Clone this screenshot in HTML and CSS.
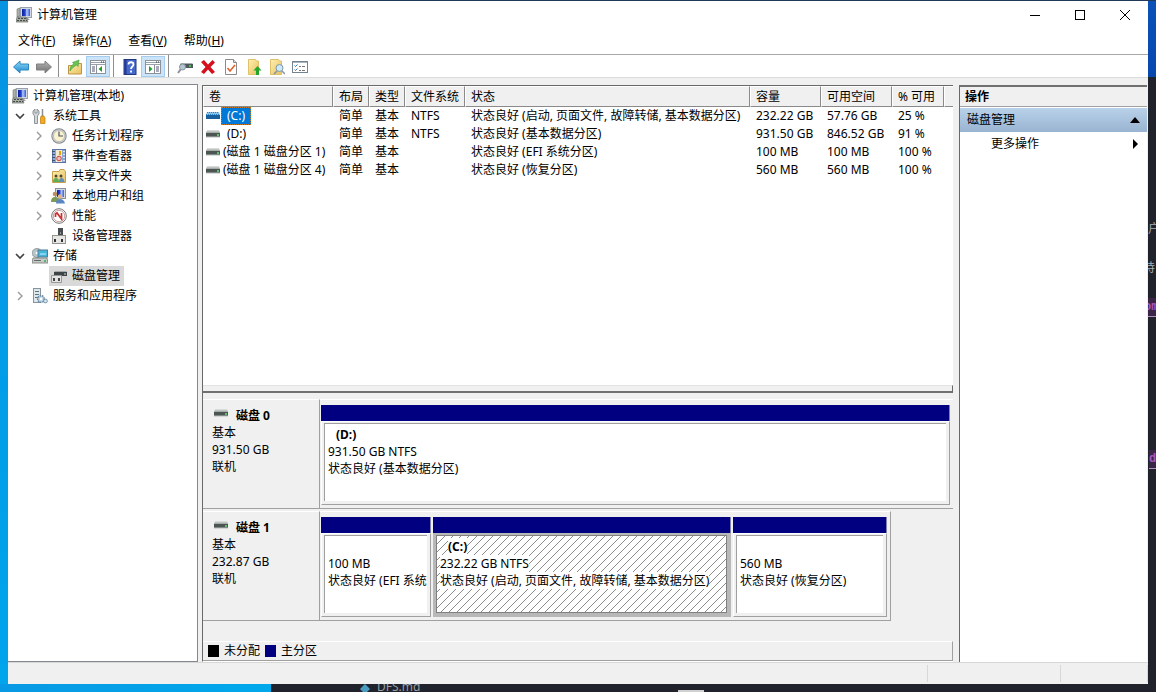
FILE: index.html
```html
<!DOCTYPE html>
<html lang="zh-CN">
<head>
<meta charset="utf-8">
<title>计算机管理</title>
<link rel="stylesheet" href="styles.css">
</head>
<body>
<svg class="sprite" aria-hidden="true">
  <defs>
    <linearGradient id="gBlue" x1="0" y1="0" x2="0" y2="1"><stop offset="0" stop-color="#8fdcf8"/><stop offset="1" stop-color="#1c86d0"/></linearGradient>
    <linearGradient id="gGray" x1="0" y1="0" x2="0" y2="1"><stop offset="0" stop-color="#b4b4b4"/><stop offset="1" stop-color="#6f6f6f"/></linearGradient>
    <linearGradient id="gFolder" x1="0" y1="0" x2="1" y2="1"><stop offset="0" stop-color="#fdf0b0"/><stop offset="1" stop-color="#e8c060"/></linearGradient>
    <linearGradient id="gScreen" x1="0" y1="0" x2="1" y2="0"><stop offset="0" stop-color="#0a1c9c"/><stop offset=".4" stop-color="#2446d0"/><stop offset=".6" stop-color="#b8ccfa"/><stop offset="1" stop-color="#3658d8"/></linearGradient>
    <linearGradient id="gDrive" x1="0" y1="0" x2="0" y2="1"><stop offset="0" stop-color="#e4e8e6"/><stop offset="1" stop-color="#9aa09c"/></linearGradient>
  </defs>
  <symbol id="computer" viewBox="0 0 16 16">
    <path d="M1 2l3-1v8l-3 1z" fill="#a8b0a8" stroke="#777" stroke-width=".6"/>
    <rect x="4.500" y=".5" width="11" height="10" fill="#d5d9e2" stroke="#9aa0ac"/>
    <rect x="6" y="2" width="8" height="7" fill="url(#gScreen)"/>
    <path d="M8 11h4l2 2H8z" fill="#9aa0a4"/>
    <path d="M1 10h9l2 5H0z" fill="#a9aea9" stroke="#666b66" stroke-width=".7"/>
    <path d="M2 11.500h8M1 13.500h10" stroke="#454c46" stroke-dasharray="2 1"/>
  </symbol>
  <symbol id="back" viewBox="0 0 16 16"><path d="M.5 8L7 2v3h8.500v6H7v3z" fill="url(#gBlue)" stroke="#2f86bd"/></symbol>
  <symbol id="forward" viewBox="0 0 16 16"><path d="M15.500 8L9 2v3H.5v6H9v3z" fill="url(#gGray)" stroke="#808080"/></symbol>
  <symbol id="folderup" viewBox="0 0 16 16">
    <path d="M1.500 6.500h5l1-2h7v10.500h-13z" fill="url(#gFolder)" stroke="#bd9443"/>
    <path d="M3 12c0-5 2-6 4-7L5.500 3.500 12 1l-1 6.500L9.500 6C7 7.500 5 9 3 12z" fill="#6cc455" stroke="#3f9a3a" stroke-width=".6"/>
  </symbol>
  <symbol id="paneleft" viewBox="0 0 16 16">
    <rect x=".5" y="1.500" width="15" height="13" fill="#fff" stroke="#8b9299"/>
    <path d="M1 3.500h14M1 5.500h14" stroke="#9aa1a8"/><path d="M11 3h1M13 3h1" stroke="#333"/>
    <path d="M6.500 6v8" stroke="#8b9299"/><path d="M2 8h3M2 10h3M2 12h3" stroke="#557"/>
    <path d="M12 7v6L8.500 10z" fill="#249b2c"/>
  </symbol>
  <symbol id="paneright" viewBox="0 0 16 16">
    <rect x=".5" y="1.500" width="15" height="13" fill="#fff" stroke="#8b9299"/>
    <path d="M1 3.500h14M1 5.500h14" stroke="#9aa1a8"/><path d="M11 3h1M13 3h1" stroke="#333"/>
    <path d="M9.500 6v8" stroke="#8b9299"/><path d="M11 8h3M11 10h3M11 12h3" stroke="#557"/>
    <path d="M4 7v6l3.500-3z" fill="#249b2c"/>
  </symbol>
  <symbol id="help" viewBox="0 0 16 16">
    <rect x="2" y=".5" width="12" height="15" fill="#4468cc" stroke="#24367e"/><path d="M3.500 1v14" stroke="#25398c" stroke-width="2"/>
    <path d="M6.500 5.500c0-3 5-3 5 0 0 2-2.500 2-2.500 4.500M9 11.500v2" fill="none" stroke="#fff" stroke-width="1.800"/>
  </symbol>
  <symbol id="scan" viewBox="0 0 16 16">
    <path d="M3 5l1-1h11l1 1v4H3z" fill="#a9afb0"/><path d="M3 5h13v4H3z" fill="#4e585a"/><path d="M12 7h2" stroke="#58d95c" stroke-width="1.500"/>
    <circle cx="5.500" cy="8" r="3" fill="#b4c8d4" stroke="#8a949c"/><path d="M3.500 10.500L1 14" stroke="#8b9196" stroke-width="2"/>
  </symbol>
  <symbol id="delete" viewBox="0 0 16 16"><path d="M1 3l3-2 4 4.500L12.500 1 15 3.500 10.500 8l4.500 5-3 2-4-4.500L4 15l-3-2 4.500-5z" fill="#d3101c"/></symbol>
  <symbol id="doccheck" viewBox="0 0 16 16"><path d="M2.500.5h8l3 3v12h-11z" fill="#fff" stroke="#8a8a8a"/><path d="M10.500.5v3h3" fill="#ddd" stroke="#8a8a8a"/><path d="M4.500 9l2.500 3 5-6" fill="none" stroke="#e0622c" stroke-width="1.600"/></symbol>
  <symbol id="fileup" viewBox="0 0 16 16"><path d="M2.500.5h7l1 1.500h2v13.500h-10z" fill="url(#gFolder)" stroke="#e0c06a"/><path d="M11.500 7l4 4.500h-2.500V16h-3v-4.500H7.500z" fill="#24a62d"/></symbol>
  <symbol id="filesearch" viewBox="0 0 16 16"><path d="M1.500.5h8l1 1.500h2v13.500h-11z" fill="url(#gFolder)" stroke="#e0c06a"/><circle cx="10.500" cy="9" r="3.500" fill="#cbe9f6" stroke="#8198a4"/><path d="M8 12l-3 3M13 12l3 3" stroke="#8793a0" stroke-width="1.500"/></symbol>
  <symbol id="checklist" viewBox="0 0 16 16"><rect x=".5" y="2.500" width="15" height="11" fill="#fff" stroke="#74838f"/><path d="M1 3.500h14" stroke="#a9b7c0"/><path d="M2.500 6.500l1 1 2-2M2.500 10.500l1 1 2-2" fill="none" stroke="#3471b3"/><path d="M7 7.500h2M10 7.500h3M7 11.500h2M10 11.500h3" stroke="#777"/></symbol>
  <symbol id="tools" viewBox="0 0 16 16">
    <path d="M3 1v4h2V1l2 2v3L5.500 8v7.500h-3V8L1 6V3z" fill="#d5d8da" stroke="#777e84" stroke-width=".8"/>
    <path d="M10.500 1v7" stroke="#8a9196" stroke-width="1.500"/><path d="M9 8h3l1 2v5.500H8.500V10z" fill="#f5a91c" stroke="#b97a12" stroke-width=".7"/>
  </symbol>
  <symbol id="clock" viewBox="0 0 16 16"><circle cx="8" cy="8" r="7.700" fill="#85898d"/><circle cx="8" cy="8" r="6.700" fill="#cfd3d6"/><circle cx="8" cy="8" r="5.500" fill="#fbf3d0" stroke="#9c9c9c" stroke-width=".5"/><path d="M8 3.500V8h4" fill="none" stroke="#4a5560" stroke-width="1.200"/></symbol>
  <symbol id="events" viewBox="0 0 16 16"><rect x="1.500" y="1.500" width="13" height="13" fill="#8da8d4" stroke="#5b74a4"/><rect x="5" y="2" width="6" height="12" fill="#f1ead0"/><path d="M12 3.500h2M12 6.500h2M12 9.500h2M12 12.500h2" stroke="#dce6f6"/><path d="M1 3.500h3M1 6.500h3M1 9.500h3M1 12.500h3" stroke="#44546c"/><path d="M9 3v4" stroke="#e3a400" stroke-width="2"/><circle cx="8" cy="10.500" r="2.300" fill="#ecc0b8" stroke="#c94040"/></symbol>
  <symbol id="share" viewBox="0 0 16 16"><path d="M1.500 3.500H8l1-2h4l1.500 2v11h-13z" fill="url(#gFolder)" stroke="#c6a04a"/><circle cx="5" cy="8" r="1.500" fill="#4a4634"/><path d="M2 14q0-4 3-4t3 4z" fill="#5fae55"/><circle cx="10" cy="8" r="1.500" fill="#4a4634"/><path d="M8 14q0-4 2.500-4t3 4z" fill="#5f8fb8"/></symbol>
  <symbol id="users" viewBox="0 0 16 16"><rect x="4.500" y=".5" width="10" height="10" fill="#d5d9e2" stroke="#8a8f98"/><rect x="6" y="2" width="7" height="7" fill="url(#gScreen)"/><circle cx="4" cy="6" r="2.300" fill="#b99160"/><path d="M0 14q0-5 4-5t4 5z" fill="#7d9b55"/><circle cx="9" cy="8.500" r="2.300" fill="#dfb78b"/><path d="M5 15.500q0-4.500 4-4.500t5 4.500z" fill="#5b86c4"/></symbol>
  <symbol id="perf" viewBox="0 0 16 16"><circle cx="8" cy="8" r="7.300" fill="#fff" stroke="#757575"/><circle cx="8" cy="8" r="5.700" fill="#fff" stroke="#c8a0a0"/><path d="M4.500 9V6L6 5l4.500 6V5" fill="none" stroke="#c93030" stroke-width="1.700"/></symbol>
  <symbol id="device" viewBox="0 0 16 16"><rect x="7" y="0" width="5" height="8" fill="#474c4f"/><path d="M9 5h1" stroke="#ddd"/><rect x="1.500" y="7.500" width="13" height="8" fill="#e6e7e5" stroke="#91958f"/><rect x="3" y="11" width="2" height="3" fill="#333"/><rect x="10" y="11" width="2" height="3" fill="#333"/></symbol>
  <symbol id="storage" viewBox="0 0 16 16"><ellipse cx="5" cy="5" rx="5" ry="4.500" fill="#b9c4c8" stroke="#7c8589" stroke-width=".7"/><circle cx="5" cy="5" r="1.300" fill="#fff"/><rect x="6" y="2" width="9.500" height="7" fill="#46b5dc" stroke="#4e7e93"/><path d="M8 6h6" stroke="#c5f3ff"/><path d="M1 10h14l1 5H0z" fill="#c8ccca" stroke="#737974" stroke-width=".8"/><path d="M2 12.500h7" stroke="#666"/><path d="M12 13h2" stroke="#33b549" stroke-width="1.500"/></symbol>
  <symbol id="diskmgmt" viewBox="0 0 16 16"><path d="M3 4h13v4H3z" fill="#3f4546"/><path d="M4 3h11l1 1H3z" fill="#a5aaa8"/><path d="M13 6h2" stroke="#cfd4d1"/><path d="M.5 7.500h10v7H.5z" fill="#e4e5e3" stroke="#999"/><path d="M3 10v3M8 10v3" stroke="#333" stroke-width="1.800"/></symbol>
  <symbol id="services" viewBox="0 0 16 16"><rect x="1.500" y=".5" width="7" height="14" fill="#dde8ec" stroke="#87949b"/><path d="M3 3.500h4M3 6.500h4M3 9.500h4" stroke="#64737b"/><circle cx="9" cy="11" r="3.300" fill="#c5d9e8" stroke="#6687a2" stroke-dasharray="1.500 .8" stroke-width="1.500"/><circle cx="9" cy="11" r="1.200" fill="#fff"/><circle cx="13.500" cy="13" r="1.900" fill="#d4e4ef" stroke="#6687a2" stroke-width=".8"/></symbol>
  <symbol id="drive" viewBox="0 0 14 8"><path d="M1 0h12l1 3H0z" fill="url(#gDrive)"/><path d="M0 3h14v4H0z" fill="#4b5652"/><path d="M0 7h14" stroke="#b8bcba"/><path d="M11 5h2" stroke="#6fe07c" stroke-width="1.500"/></symbol>
  <symbol id="driveSel" viewBox="0 0 14 8"><path d="M1 0h12l1 3H0z" fill="#8fc4e8"/><path d="M0 3h14v4H0z" fill="#17609b"/><path d="M1 .5h12M0 2.500h14" stroke="#2784c8" stroke-dasharray="1 1"/></symbol>
  <symbol id="open" viewBox="0 0 10 10"><path d="M1 3l4 4 4-4" fill="none" stroke="#404040" stroke-width="1.600"/></symbol>
  <symbol id="closed" viewBox="0 0 10 10"><path d="M3 1l4 4-4 4" fill="none" stroke="#9a9a9a" stroke-width="1.400"/></symbol>
</svg>

<div class="desktop">
  <div class="editor-edge" aria-hidden="true">
    <span class="frag frag-a">户</span>
    <span class="frag frag-b">持</span>
    <span class="frag frag-c">om</span>
    <span class="frag frag-d">d</span>
  </div>

  <main class="window">
    <header class="titlebar">
      <svg class="icon"><use href="#computer"/></svg>
      <h1 class="title">计算机管理</h1>
      <div class="caption">
        <button class="cap" aria-label="最小化"><svg class="cap-icon" viewBox="0 0 10 10"><path d="M0 5.500h10" stroke="#000"/></svg></button>
        <button class="cap" aria-label="最大化"><svg class="cap-icon" viewBox="0 0 10 10"><rect x=".5" y=".5" width="9" height="9" fill="none" stroke="#000"/></svg></button>
        <button class="cap" aria-label="关闭"><svg class="cap-icon" viewBox="0 0 10 10"><path d="M0 0l10 10M10 0L0 10" stroke="#000"/></svg></button>
      </div>
    </header>

    <nav class="menubar">
      <button class="menu">文件(<u>F</u>)</button>
      <button class="menu">操作(<u>A</u>)</button>
      <button class="menu">查看(<u>V</u>)</button>
      <button class="menu">帮助(<u>H</u>)</button>
    </nav>

    <div class="toolbar">
      <div class="group">
        <button class="tool" aria-label="后退"><svg class="icon"><use href="#back"/></svg></button>
        <button class="tool" aria-label="前进"><svg class="icon"><use href="#forward"/></svg></button>
      </div>
      <div class="group">
        <button class="tool" aria-label="上一级"><svg class="icon"><use href="#folderup"/></svg></button>
        <button class="tool pressed" aria-label="显示控制台树"><svg class="icon"><use href="#paneleft"/></svg></button>
      </div>
      <div class="group">
        <button class="tool" aria-label="帮助"><svg class="icon"><use href="#help"/></svg></button>
        <button class="tool pressed" aria-label="显示操作窗格"><svg class="icon"><use href="#paneright"/></svg></button>
      </div>
      <div class="group">
        <button class="tool" aria-label="重新扫描"><svg class="icon"><use href="#scan"/></svg></button>
        <button class="tool" aria-label="删除"><svg class="icon"><use href="#delete"/></svg></button>
        <button class="tool" aria-label="属性"><svg class="icon"><use href="#doccheck"/></svg></button>
        <button class="tool" aria-label="打开"><svg class="icon"><use href="#fileup"/></svg></button>
        <button class="tool" aria-label="浏览"><svg class="icon"><use href="#filesearch"/></svg></button>
        <button class="tool" aria-label="设置"><svg class="icon"><use href="#checklist"/></svg></button>
      </div>
    </div>

    <div class="panes">
      <ul class="tree">
        <li class="node root"><svg class="icon"><use href="#computer"/></svg><span class="name">计算机管理(本地)</span></li>
        <li class="node"><button class="twist" aria-label="折叠"><svg class="arrow"><use href="#open"/></svg></button><svg class="icon"><use href="#tools"/></svg><span class="name">系统工具</span></li>
        <li class="node sub"><button class="twist" aria-label="展开"><svg class="arrow"><use href="#closed"/></svg></button><svg class="icon"><use href="#clock"/></svg><span class="name">任务计划程序</span></li>
        <li class="node sub"><button class="twist" aria-label="展开"><svg class="arrow"><use href="#closed"/></svg></button><svg class="icon"><use href="#events"/></svg><span class="name">事件查看器</span></li>
        <li class="node sub"><button class="twist" aria-label="展开"><svg class="arrow"><use href="#closed"/></svg></button><svg class="icon"><use href="#share"/></svg><span class="name">共享文件夹</span></li>
        <li class="node sub"><button class="twist" aria-label="展开"><svg class="arrow"><use href="#closed"/></svg></button><svg class="icon"><use href="#users"/></svg><span class="name">本地用户和组</span></li>
        <li class="node sub"><button class="twist" aria-label="展开"><svg class="arrow"><use href="#closed"/></svg></button><svg class="icon"><use href="#perf"/></svg><span class="name">性能</span></li>
        <li class="node leaf"><span class="pick"><svg class="icon"><use href="#device"/></svg><span class="name">设备管理器</span></span></li>
        <li class="node"><button class="twist" aria-label="折叠"><svg class="arrow"><use href="#open"/></svg></button><svg class="icon"><use href="#storage"/></svg><span class="name">存储</span></li>
        <li class="node leaf"><span class="pick selected"><svg class="icon"><use href="#diskmgmt"/></svg><span class="name">磁盘管理</span></span></li>
        <li class="node"><button class="twist" aria-label="展开"><svg class="arrow"><use href="#closed"/></svg></button><svg class="icon"><use href="#services"/></svg><span class="name">服务和应用程序</span></li>
      </ul>

      <section class="center">
        <div class="list">
          <table class="volumes">
            <colgroup><col class="c-vol"><col class="c-layout"><col class="c-type"><col class="c-fs"><col class="c-state"><col class="c-cap"><col class="c-free"><col class="c-pct"><col></colgroup>
            <thead><tr><th>卷</th><th>布局</th><th>类型</th><th>文件系统</th><th>状态</th><th>容量</th><th>可用空间</th><th>% 可用</th><th></th></tr></thead>
            <tbody>
              <tr><td class="vol"><span class="vol-cell"><svg class="drive"><use href="#driveSel"/></svg><span class="vol-name letter active">(C:)</span></span></td><td>简单</td><td>基本</td><td>NTFS</td><td>状态良好 (启动, 页面文件, 故障转储, 基本数据分区)</td><td>232.22 GB</td><td>57.76 GB</td><td>25 %</td><td></td></tr>
              <tr><td class="vol"><span class="vol-cell"><svg class="drive"><use href="#drive"/></svg><span class="vol-name letter">(D:)</span></span></td><td>简单</td><td>基本</td><td>NTFS</td><td>状态良好 (基本数据分区)</td><td>931.50 GB</td><td>846.52 GB</td><td>91 %</td><td></td></tr>
              <tr><td class="vol"><span class="vol-cell"><svg class="drive"><use href="#drive"/></svg><span class="vol-name">(磁盘 1 磁盘分区 1)</span></span></td><td>简单</td><td>基本</td><td></td><td>状态良好 (EFI 系统分区)</td><td>100 MB</td><td>100 MB</td><td>100 %</td><td></td></tr>
              <tr><td class="vol"><span class="vol-cell"><svg class="drive"><use href="#drive"/></svg><span class="vol-name">(磁盘 1 磁盘分区 4)</span></span></td><td>简单</td><td>基本</td><td></td><td>状态良好 (恢复分区)</td><td>560 MB</td><td>560 MB</td><td>100 %</td><td></td></tr>
            </tbody>
          </table>
        </div>
        <div class="splitter"></div>
        <div class="disks">
          <article class="disk">
            <div class="disk-info">
              <h2 class="disk-name"><svg class="drive"><use href="#drive"/></svg>磁盘 0</h2>
              <p>基本</p><p>931.50 GB</p><p>联机</p>
            </div>
            <div class="map">
              <div class="part whole"><div class="bar"></div><div class="frame"><div class="body"><p class="letter-line">(D:)</p><p>931.50 GB NTFS</p><p>状态良好 (基本数据分区)</p></div></div></div>
            </div>
          </article>
          <article class="disk">
            <div class="disk-info">
              <h2 class="disk-name"><svg class="drive"><use href="#drive"/></svg>磁盘 1</h2>
              <p>基本</p><p>232.87 GB</p><p>联机</p>
            </div>
            <div class="map partial">
              <div class="part efi"><div class="bar"></div><div class="frame"><div class="body"><p class="letter-line">&nbsp;</p><p>100 MB</p><p>状态良好 (EFI 系统分区)</p></div></div></div>
              <div class="part system"><div class="bar"></div><div class="frame chosen"><div class="body hatch"><p class="letter-line"><span class="plate">(C:)</span></p><p><span class="plate">232.22 GB NTFS</span></p><p><span class="plate">状态良好 (启动, 页面文件, 故障转储, 基本数据分区)</span></p></div></div></div>
              <div class="part recovery"><div class="bar"></div><div class="frame"><div class="body"><p class="letter-line">&nbsp;</p><p>560 MB</p><p>状态良好 (恢复分区)</p></div></div></div>
            </div>
          </article>
          <div class="legend"><span class="swatch free"></span><span class="key">未分配</span><span class="swatch primary"></span><span class="key">主分区</span></div>
        </div>
      </section>

      <aside class="actions">
        <h2 class="actions-head">操作</h2>
        <button class="section">磁盘管理<svg class="tri" viewBox="0 0 10 10"><path d="M0 8l5-6 5 6z"/></svg></button>
        <button class="action">更多操作<svg class="tri" viewBox="0 0 10 10"><path d="M3 0l5 5-5 5z"/></svg></button>
      </aside>
    </div>

    <footer class="status"><span class="cell main"></span><span class="cell mid"></span><span class="cell end"></span></footer>
  </main>

  <div class="behind">
    <svg class="gem" viewBox="0 0 10 10"><path d="M5 0l5 5-5 5-5-5z" fill="#4a9dc0"/></svg><span class="file">DFS.md</span><span class="thumb"></span>
  </div>
</div>
</body>
</html>
```
FILE: styles.css
```css
* { box-sizing: border-box; }

body {
  margin: 0;
  font: 12px/18px "Noto Sans", "Noto Sans CJK SC", sans-serif;
  color: #000;
}

h1, h2, p, ul { margin: 0; padding: 0; font-size: 12px; }
h1 { font-weight: 400; }

button {
  margin: 0;
  padding: 0;
  border: 0;
  background: none;
  font: inherit;
  color: inherit;
}

svg { display: block; flex: none; }
.sprite { position: absolute; width: 0; height: 0; }
.icon { width: 16px; height: 16px; }
.drive { width: 14px; height: 8px; }

.desktop {
  position: relative;
  display: flex;
  flex-direction: column;
  min-height: 100vh;
  padding: 1px 8px 0;
  overflow: hidden;
  background:
    linear-gradient(#20395a, #20395a) top / 100% 1px no-repeat,
    linear-gradient(90deg, #0899e4, #00a8ec) left bottom / 271px 8px no-repeat,
    linear-gradient(#0593e2, #00a5ec) left / 8px 100% no-repeat,
    linear-gradient(#0b52b8, #0848ae) right top / 8px 77px no-repeat,
    #20232c;
}

/* Editor window showing past the right edge */
.editor-edge {
  position: absolute;
  top: 0;
  right: 0;
  bottom: 0;
  width: 8px;
  overflow: hidden;
}
.frag { position: absolute; left: 0; color: #a9adb5; }
.frag-a { top: 220px; }
.frag-b { top: 259px; left: -5px; }
.frag-c, .frag-d {
  font-family: "Liberation Mono", monospace;
  font-weight: 700;
  color: #a857c0;
  border-bottom: 1px solid #b58cc4;
  background: #3a2547;
}
.frag-c { top: 298px; left: -4px; }
.frag-d { top: 450px; left: 1px; }

.window {
  position: relative;
  flex: 1;
  display: flex;
  flex-direction: column;
  background: #f0f0f0;
}

.titlebar { display: flex; align-items: center; height: 28px; padding: 0 1px 0 8px; gap: 5px; background: #fff; }
.caption { display: flex; margin-left: auto; }
.cap { display: grid; place-items: center; width: 45px; height: 28px; }
.cap-icon { width: 10px; height: 10px; }

.menubar { display: flex; gap: 17px; height: 26px; padding: 3px 10px 0; background: #fff; border-bottom: 1px solid #a8a8a8; }
.menu { align-self: flex-start; }

.toolbar { display: flex; height: 23px; padding-left: 1px; background: #fff; border-bottom: 1px solid #dcdcdc; }
.group { display: flex; align-items: flex-end; }
.group + .group { margin-left: 3px; padding-left: 4px; border-left: 1px solid #8e8e8e; }
.tool { display: grid; place-items: center; width: 23px; height: 21px; }
.tool.pressed { width: 24px; background: #cce4f7; border: 1px solid #a4cdf0; }

.panes { flex: 1; display: flex; margin-top: 6px; gap: 4px; }

.tree {
  flex: none;
  width: 190px;
  padding-top: 1px;
  list-style: none;
  background: #fff;
  border: 1px solid #828790;
  border-left: 0;
}
.node { display: flex; align-items: center; height: 20px; padding-left: 4px; white-space: nowrap; }
.sub { padding-left: 23px; }
.leaf { padding-left: 41px; }
.twist { display: grid; place-items: center; width: 16px; height: 16px; margin-right: 4px; }
.arrow { width: 10px; height: 10px; }
.name { padding: 0 4px; }
.node .icon + .name { padding-left: 5px; }
.pick { display: flex; align-items: center; height: 20px; padding-left: 2px; }
.selected { background: #d9d9d9; }

.center {
  flex: 1;
  min-width: 0;
  display: flex;
  flex-direction: column;
  margin-top: 1px;
  border-top: 1px solid #696969;
  border-left: 1px solid #696969;
  border-bottom: 1px solid #fff;
}
.list { flex: 1; background: #fff; overflow: hidden; }

.volumes { width: 100%; table-layout: fixed; border-collapse: separate; border-spacing: 0; }
.volumes th, .volumes td { padding: 0 0 0 6px; font-weight: 400; text-align: left; white-space: nowrap; }
.volumes th {
  height: 21px;
  background: #f0f0f0;
  border-top: 1px solid #fff;
  border-left: 1px solid #fff;
  border-right: 1px solid #8a8a8a;
  border-bottom: 1px solid #8a8a8a;
  line-height: 18px;
}
.volumes th { padding-left: 5px; }
.volumes th:last-child { border-right: 0; }
.volumes td { height: 18px; }
.volumes .vol { padding-left: 3px; }
.c-vol { width: 130px; }
.c-layout, .c-type { width: 36px; }
.c-fs { width: 60px; }
.c-state { width: 285px; }
.c-cap, .c-free { width: 71px; }
.c-pct { width: 52px; }
.vol-cell { display: flex; align-items: center; }
.vol-name { padding-left: 3px; }
.vol-name.letter { margin-left: 1px; padding: 0 6px; }
.vol-name.active { color: #fff; background: #0078d7; outline: 1px dotted #c87820; outline-offset: -1px; }

.splitter { height: 8px; background: #f0f0f0; border-top: 1px solid #e3e3e3; border-right: 1px solid #696969; border-bottom: 2px solid #707070; }

.disks { padding-top: 6px; }
.disk { display: flex; height: 110px; margin-bottom: 2px; line-height: 17px; }
.disk-info { flex: none; width: 117px; padding: 7px 0 0 9px; border-top: 1px solid #fff; border-right: 1px solid #a0a0a0; border-bottom: 1px solid #a0a0a0; }
.disk-name { display: flex; align-items: center; gap: 8px; padding-left: 2px; }
.disk-name .drive { margin-bottom: 6px; }
.map { flex: 1; min-width: 0; display: flex; gap: 2px; padding: 5px 3px 3px 1px; border-bottom: 1px solid #a0a0a0; border-top: 1px solid #fff; }
.map.partial { flex: none; width: 571px; border-right: 1px solid #a0a0a0; }
.part { display: flex; flex-direction: column; min-width: 0; }
.whole { flex: 1; }
.efi { flex: 110; }
.system { flex: 298; }
.recovery { flex: 154; }
.bar { height: 16px; background: #000080; border-right: 1px solid #8080b0; }
.frame { flex: 1; display: flex; min-width: 0; padding: 1px 3px 3px 2px; border: 1px solid #fff; border-right-color: #a0a0a0; border-bottom-color: #a0a0a0; }
.frame.chosen { background: #b8b8b8; border-color: #b8b8b8; }
.body { flex: 1; min-width: 0; padding: 2px 4px 2px 3px; overflow: hidden; white-space: nowrap; background: #fff; border-top: 1px solid #a0a0a0; border-left: 1px solid #a0a0a0; }
.letter-line { padding-left: 8px; font-weight: 700; }
.hatch {
  border: 1px solid #808080;
  background: linear-gradient(135deg, transparent 44%, #8c8c8c 50%, transparent 56%) 0 0 / 8px 8px #fff;
}
.plate { display: inline-block; background: #fff; }

.legend { display: flex; align-items: center; gap: 5px; height: 20px; margin-top: 20px; padding-left: 5px; border-top: 1px solid #fff; border-right: 1px solid #a0a0a0; border-bottom: 1px solid #a0a0a0; }
.swatch { width: 11px; height: 12px; }
.free { background: #000; }
.primary { background: #000080; }

.actions { flex: none; width: 188px; margin: 1px 1px 0 2px; background: #fff; border-top: 2px solid #707070; border-left: 1px solid #696969; }
.actions-head { height: 20px; padding: 0 5px; line-height: 19px; background: #f0f0f0; border-bottom: 1px solid #a0a0a0; }
.section, .action { display: flex; align-items: center; justify-content: space-between; width: 100%; height: 24px; padding: 0 7px; }
.section { margin-top: 1px; height: 24px; background: linear-gradient(#b9d1ea, #99b4d1); }
.action { padding-left: 31px; }
.tri { width: 10px; height: 10px; }

.status { display: flex; height: 22px; border-top: 1px solid #d7d7d7; }
.cell { margin: 2px 0; border-right: 1px solid #d7d7d7; }
.main { flex: 1; }
.mid { width: 133px; }
.end { width: 87px; }

.behind { display: flex; align-items: flex-end; height: 8px; padding-left: 352px; overflow: hidden; color: #9a9da3; line-height: 10px; }
.gem { width: 10px; height: 10px; margin: 0 7px -2px 0; }
.thumb { width: 26px; height: 2px; margin-left: 258px; background: #d0d0d0; }
```
